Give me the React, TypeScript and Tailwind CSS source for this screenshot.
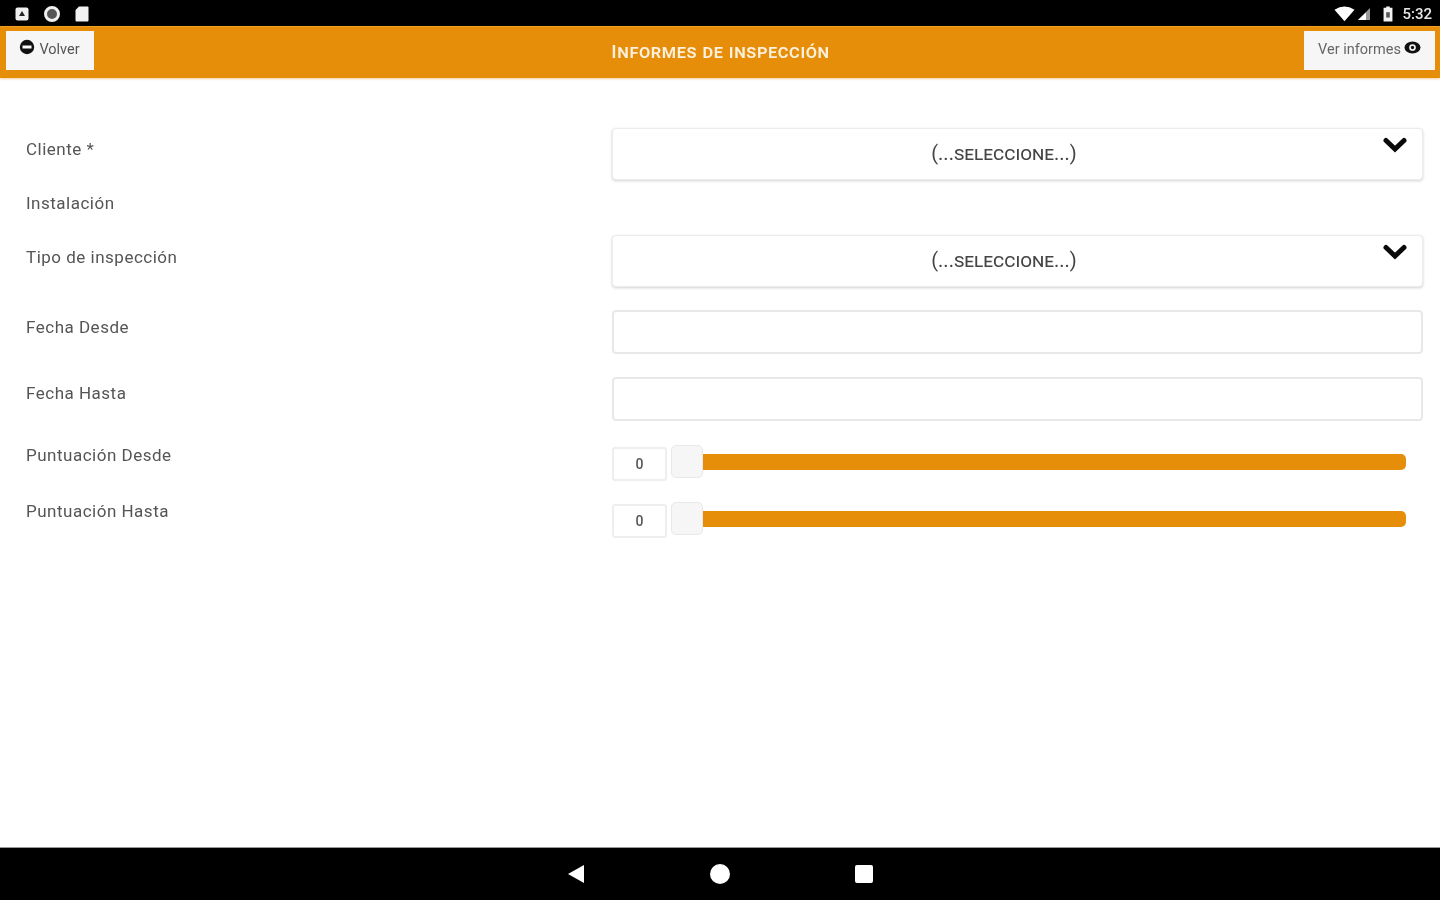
import React from "react";

const font = "font-['Roboto',sans-serif]";

function Label({ children, top }: { children: React.ReactNode; top: string }) {
  return (
    <div className={`w-[612px] shrink-0 pl-[26px] text-[17px] leading-[20px] text-[#555] tracking-[0.5px] ${top}`}>
      {children}
    </div>
  );
}

function Chevron() {
  return (
    <svg viewBox="0 0 24 16" className="absolute right-[15px] top-[8px] w-[24px] h-[16px]">
      <path d="M3 3.5 L12 12 L21 3.5" fill="none" stroke="#0a0a0a" strokeWidth="5" strokeLinecap="round" strokeLinejoin="miter" />
    </svg>
  );
}

function SelectBox() {
  return (
    <div className="relative h-[52px] w-[811px] rounded-[4px] border border-[#ececec] bg-white shadow-[0_1px_3px_rgba(0,0,0,0.18)] flex items-center justify-center pr-[27px] pb-[3px] text-[20px] text-[#444] [font-variant:all-small-caps]">
      (...SELECCIONE...)
      <Chevron />
    </div>
  );
}

function InputBox() {
  return <div className="h-[44px] w-[811px] rounded-[4px] border-2 border-[#e8e8e8] bg-white" />;
}

function SliderRow() {
  return (
    <div className="flex items-start w-[811px]">
      <div className="mt-[2px] h-[34px] w-[55px] rounded-[3px] border-2 border-[#eeeeee] bg-white flex items-center justify-center text-[14px] font-medium text-[#555]">
        0
      </div>
      <div className="relative ml-[4px] flex-1 h-[34px]">
        <div className="ml-[32px] mr-[17px] mt-[9px] h-[16px] rounded-r-[5px] bg-[#e68e0a]" />
        <div className="absolute left-0 top-0 h-[33px] w-[32px] rounded-[5px] border border-[#e8e8e8] bg-[#f6f6f6]" />
      </div>
    </div>
  );
}

function Row({ label, top, mt, children }: { label: string; top: string; mt: string; children?: React.ReactNode }) {
  return (
    <div className={`flex items-start ${mt}`}>
      <Label top={top}>{label}</Label>
      {children}
    </div>
  );
}

export default function App() {
  return (
    <div className={`${font} flex h-[900px] w-[1440px] flex-col overflow-hidden bg-white [filter:blur(0.7px)]`}>
      <div className="flex h-[26px] shrink-0 items-center justify-between bg-black pl-[15px] pr-[8px] pt-[2px] text-white">
        <div className="flex items-center gap-[14px]">
          <svg viewBox="0 0 14 14" className="h-[14px] w-[14px]">
            <rect x="0.5" y="0.5" width="13" height="13" rx="2" fill="#f0f0f0" />
            <path d="M7 4 L10 9 H4 Z" fill="#222" />
          </svg>
          <svg viewBox="0 0 18 18" className="h-[18px] w-[18px]">
            <circle cx="9" cy="9" r="6.5" fill="#555" stroke="#f0f0f0" strokeWidth="3" />
          </svg>
          <svg viewBox="0 0 14 16" className="h-[16px] w-[14px]">
            <path d="M4 0.5 H12.5 A1 1 0 0 1 13.5 1.5 V14.5 A1 1 0 0 1 12.5 15.5 H1.5 A1 1 0 0 1 0.5 14.5 V4 Z" fill="#f2f2f2" />
          </svg>
        </div>
        <div className="flex items-center">
          <svg viewBox="0 0 22 16" className="h-[16px] w-[21px]">
            <path d="M0.5 3.5 Q11 -3 21.5 3.5 L11 15.5 Z" fill="#fff" />
          </svg>
          <svg viewBox="0 0 14 14" className="ml-[2px] h-[14px] w-[14px]">
            <path d="M13 1 V13 H1 Z" fill="#9a9a9a" />
            <path d="M9 5.5 V13 H1 Z" fill="#fff" />
          </svg>
          <svg viewBox="0 0 12 18" className="ml-[11px] h-[16px] w-[12px]">
            <path d="M4 0.5 H8 V2 H11 V17.5 H1 V2 H4 Z" fill="#f2f2f2" />
            <rect x="4" y="7" width="4" height="6" fill="#555" />
          </svg>
          <span className="ml-[8px] text-[15px] font-medium leading-none text-[#e8e8e8]">5:32</span>
        </div>
      </div>

      <div className="grid h-[52px] shrink-0 grid-cols-[1fr_auto_1fr] items-start border-t border-[#f0a020] bg-[#e68e0a] pl-[6px] pr-[5px] pt-[4px] shadow-[0_1px_2px_rgba(230,142,10,0.4)]">
        <div className="flex h-[39px] w-[88px] items-start justify-center gap-[4px] bg-[#f6f6f6] pt-[10px] pr-[1px] text-[14.5px] leading-[18px] text-[#555]">
          <svg viewBox="0 0 16 16" className="mt-[-2px] h-[16px] w-[16px]">
            <circle cx="8" cy="8" r="7.2" fill="#111" />
            <path d="M3.5 8 H12.5" stroke="#fff" strokeWidth="3" />
          </svg>
          Volver
        </div>
        <div className="mt-[11px] text-[19px] font-medium leading-[20px] text-[#fdf0dc] [font-variant:small-caps] tracking-[0.6px]">
          Informes de inspección
        </div>
        <div className="flex h-[39px] w-[131px] items-start justify-center gap-[3px] justify-self-end bg-[#f6f6f6] pt-[10px] text-[14.5px] leading-[18px] text-[#666]">
          Ver informes
          <svg viewBox="0 0 18 14" className="h-[13px] w-[17px]">
            <ellipse cx="9" cy="7" rx="8.6" ry="6.4" fill="#111" />
            <circle cx="9" cy="7" r="3.6" fill="#f6f6f6" />
            <circle cx="9" cy="7" r="1.8" fill="#111" />
          </svg>
        </div>
      </div>

      <div className="flex-1">
        <Row label="Cliente *" top="mt-[11px]" mt="mt-[50px]">
          <SelectBox />
        </Row>
        <Row label="Instalación" top="mt-0" mt="mt-[13px]" />
        <Row label="Tipo de inspección" top="mt-[12px]" mt="mt-[22px]">
          <SelectBox />
        </Row>
        <Row label="Fecha Desde" top="mt-[7px]" mt="mt-[23px]">
          <InputBox />
        </Row>
        <Row label="Fecha Hasta" top="mt-[6px]" mt="mt-[23px]">
          <InputBox />
        </Row>
        <Row label="Puntuación Desde" top="mt-0" mt="mt-[24px]">
          <SliderRow />
        </Row>
        <Row label="Puntuación Hasta" top="mt-[-1px]" mt="mt-[21px]">
          <SliderRow />
        </Row>
      </div>

      <div className="flex h-[53px] shrink-0 items-center justify-center gap-[125px] border-t border-[#999] bg-black pb-[1px]">
        <svg viewBox="0 0 18 20" className="h-[20px] w-[18px]">
          <path d="M17 1 V19 L1 10 Z" fill="#fff" />
        </svg>
        <div className="h-[20px] w-[20px] rounded-full bg-white" />
        <div className="h-[18px] w-[18px] rounded-[2px] bg-white" />
      </div>
    </div>
  );
}
